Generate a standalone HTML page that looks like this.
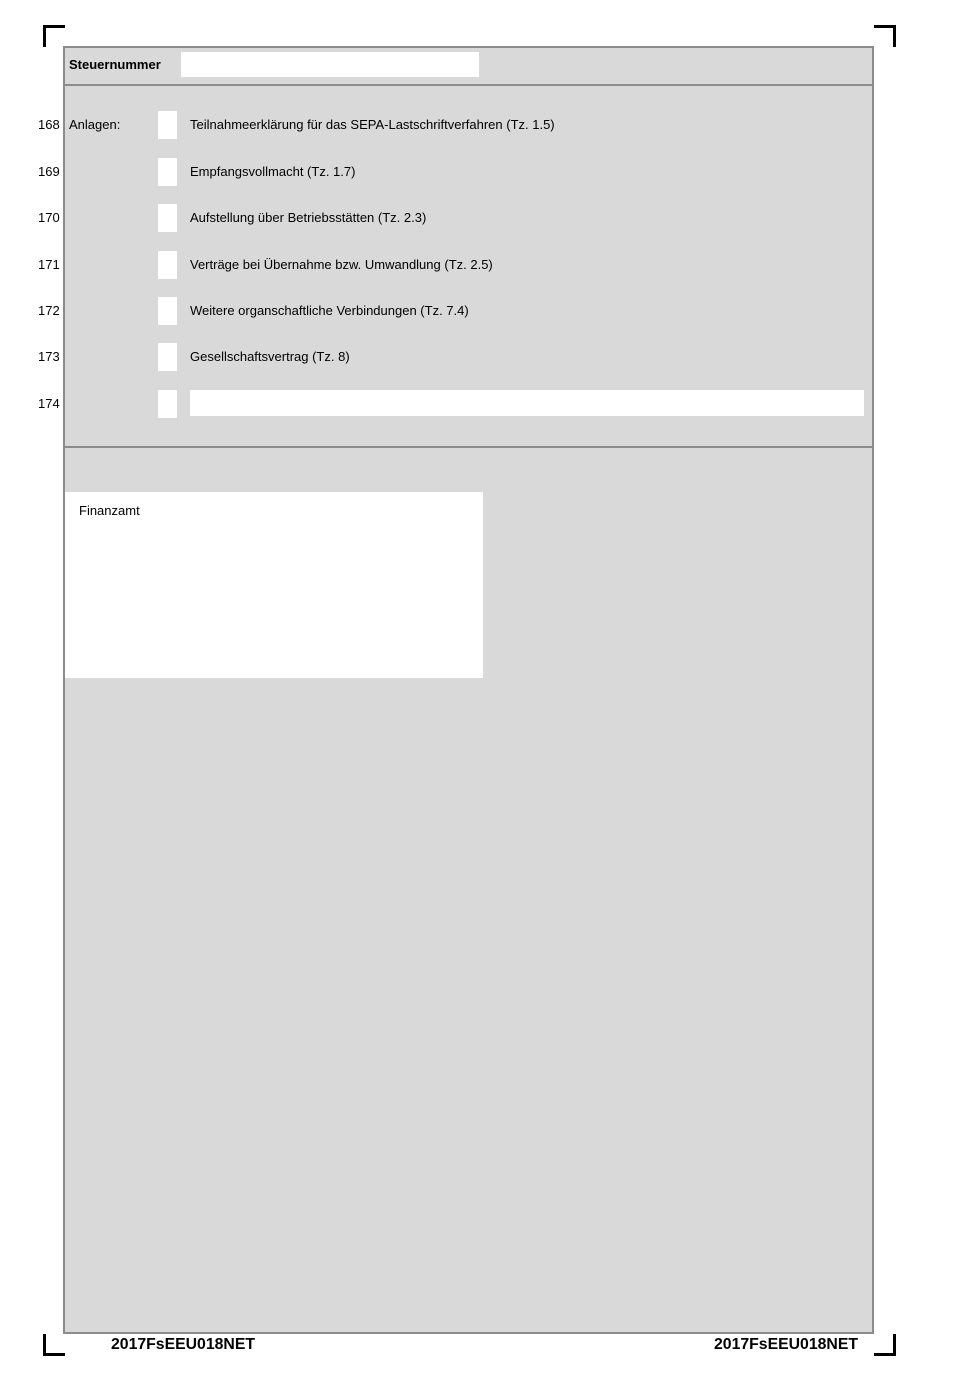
<!DOCTYPE html>
<html><head><style>
body{margin:0;width:975px;height:1379px;background:#fff;position:relative;font-family:"Liberation Sans",sans-serif;font-size:13px;color:#000}
div{position:absolute;box-sizing:border-box}
.k{background:#000}
.cb{left:158px;width:19px;height:28px;background:#fff}
.n{left:38px}
.t{left:190px}
</style></head><body>
<div class="k" style="left:43px;top:25px;width:22px;height:3px"></div>
<div class="k" style="left:43px;top:25px;width:3px;height:22px"></div>
<div class="k" style="left:874px;top:25px;width:22px;height:3px"></div>
<div class="k" style="left:893px;top:25px;width:3px;height:22px"></div>
<div class="k" style="left:43px;top:1353px;width:22px;height:3px"></div>
<div class="k" style="left:43px;top:1334px;width:3px;height:22px"></div>
<div class="k" style="left:874px;top:1353px;width:22px;height:3px"></div>
<div class="k" style="left:893px;top:1334px;width:3px;height:22px"></div>

<div style="left:63px;top:46px;width:811px;height:1288px;background:#d9d9d9;border:2px solid #8c8c8c"></div>
<div style="left:64px;top:84px;width:809px;height:2px;background:#8c8c8c"></div>
<div style="left:64px;top:446px;width:809px;height:2px;background:#8c8c8c"></div>

<div style="left:69px;top:57px;font-weight:bold;font-size:13px">Steuernummer</div>
<div style="left:181px;top:52px;width:298px;height:25px;background:#fff"></div>

<div class="n" style="top:117px">168</div><div style="left:69px;top:117px">Anlagen:</div>
<div class="cb" style="top:111px"></div><div class="t" style="top:117px">Teilnahmeerklärung für das SEPA-Lastschriftverfahren (Tz. 1.5)</div>
<div class="n" style="top:164px">169</div><div class="cb" style="top:158px"></div><div class="t" style="top:164px">Empfangsvollmacht (Tz. 1.7)</div>
<div class="n" style="top:210px">170</div><div class="cb" style="top:204px"></div><div class="t" style="top:210px">Aufstellung über Betriebsstätten (Tz. 2.3)</div>
<div class="n" style="top:257px">171</div><div class="cb" style="top:251px"></div><div class="t" style="top:257px">Verträge bei Übernahme bzw. Umwandlung (Tz. 2.5)</div>
<div class="n" style="top:303px">172</div><div class="cb" style="top:297px"></div><div class="t" style="top:303px">Weitere organschaftliche Verbindungen (Tz. 7.4)</div>
<div class="n" style="top:349px">173</div><div class="cb" style="top:343px"></div><div class="t" style="top:349px">Gesellschaftsvertrag (Tz. 8)</div>
<div class="n" style="top:396px">174</div><div class="cb" style="top:390px"></div>
<div style="left:190px;top:390px;width:674px;height:26px;background:#fff"></div>

<div style="left:65px;top:492px;width:418px;height:186px;background:#fff"></div>
<div style="left:79px;top:503px">Finanzamt</div>

<div style="left:111px;top:1336px;font-weight:bold;font-size:15.8px">2017FsEEU018NET</div>
<div style="left:714px;top:1336px;font-weight:bold;font-size:15.8px">2017FsEEU018NET</div>
</body></html>
